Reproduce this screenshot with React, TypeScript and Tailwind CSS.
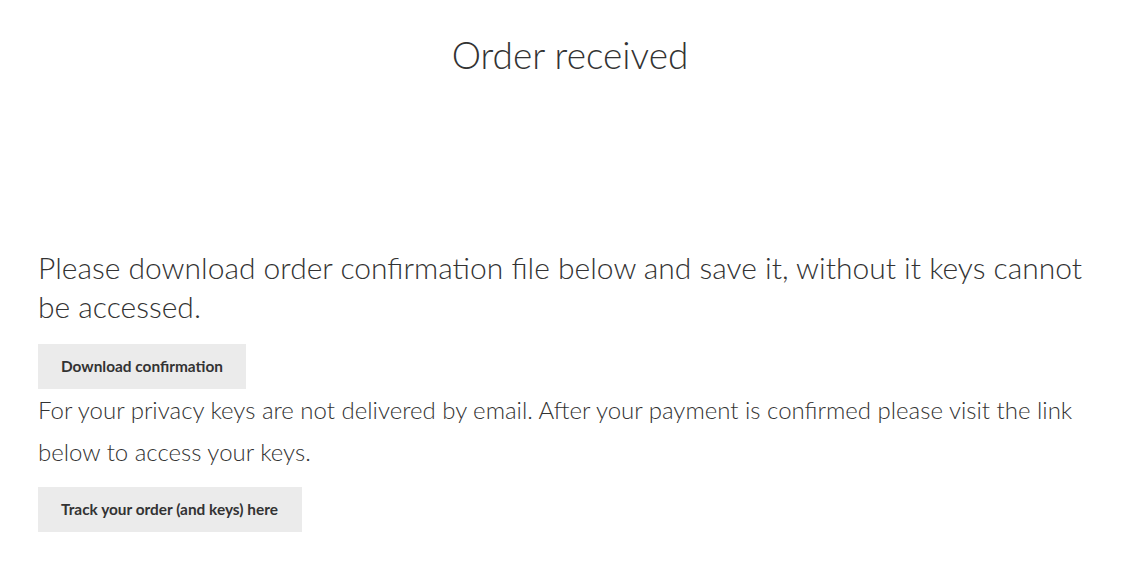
export default function App() {
  return (
    <div
      className="w-full min-h-[562px] bg-white text-[#333333]"
      style={{ fontFamily: '"Source Sans Pro", Lato, "Open Sans", sans-serif' }}
    >
      <div className="px-[38px]">
        <h1 className="pt-[30px] pl-[15px] text-center text-[37px] leading-[50px] font-light">
          Order received
        </h1>
        <div className="pt-[168px]">
          <p className="text-[30px] leading-[39px] font-light">
            Please download order confirmation file below and save it, without it keys cannot be accessed.
          </p>
          <button className="mt-[18px] h-[45px] px-[23px] bg-[#ebebeb] text-[15.4px] font-bold text-[#333333]">
            Download confirmation
          </button>
          <p className="text-[24px] leading-[42px] font-light">
            For your privacy keys are not delivered by email. After your payment is confirmed please visit the link below to access your keys.
          </p>
          <button className="mt-[14px] h-[45px] pl-[23px] pr-[24px] bg-[#ebebeb] text-[15.4px] font-bold text-[#333333]">
            Track your order (and keys) here
          </button>
        </div>
      </div>
    </div>
  );
}
